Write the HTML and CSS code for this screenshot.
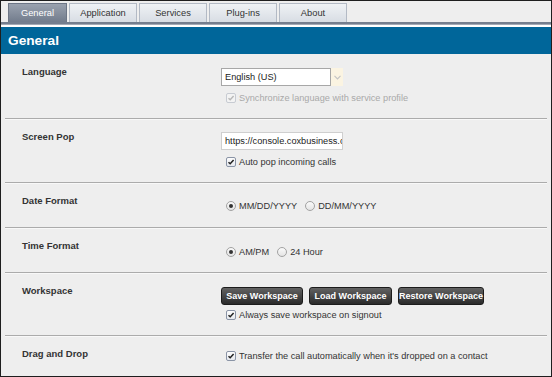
FILE: index.html
```html
<!DOCTYPE html>
<html>
<head>
<meta charset="utf-8">
<link rel="stylesheet" href="styles.css">
</head>
<body>
<div class="frame">
  <div class="tabs">
    <div class="tab tab-active tab-first">General</div>
    <div class="tab">Application</div>
    <div class="tab">Services</div>
    <div class="tab">Plug-ins</div>
    <div class="tab">About</div>
  </div>
  <div class="tabline"></div>
  <div class="header">General</div>
  <div class="rows">
    <div class="row row-h64">
      <div class="label">Language</div>
      <div class="ctrl">
        <div class="select">
          <div class="select-value">English (US)</div>
          <div class="select-arrow">
            <svg width="7" height="5" viewBox="0 0 7 5"><path d="M0.5 0.8 L3.5 3.8 L6.5 0.8" fill="none" stroke="#c4c4c4" stroke-width="1.2"/></svg>
          </div>
        </div>
        <div class="opt opt-gap6 opt-disabled">
          <span class="cb cb-disabled"><svg width="8" height="8" viewBox="0 0 8 8"><path d="M1.5 4.2 L3.2 5.8 L6.6 2" fill="none" stroke="#b8b8b8" stroke-width="1.4"/></svg></span>
          <span>Synchronize language with service profile</span>
        </div>
      </div>
    </div>
    <div class="row row-h63">
      <div class="label">Screen Pop</div>
      <div class="ctrl ctrl-pt1">
        <input class="textbox" type="text" value="https://console.coxbusiness.com/screenpop">
        <div class="opt opt-gap6">
          <span class="cb"><svg width="8" height="8" viewBox="0 0 8 8"><path d="M1.5 4.2 L3.2 5.8 L6.6 2" fill="none" stroke="#222" stroke-width="1.5"/></svg></span>
          <span>Auto pop incoming calls</span>
        </div>
      </div>
    </div>
    <div class="row row-h44">
      <div class="label">Date Format</div>
      <div class="ctrl ctrl-pt5">
        <div class="opt">
          <span class="radio radio-on"></span><span class="radio-text">MM/DD/YYYY</span>
          <span class="radio"></span><span>DD/MM/YYYY</span>
        </div>
      </div>
    </div>
    <div class="row row-h44">
      <div class="label">Time Format</div>
      <div class="ctrl ctrl-pt6">
        <div class="opt">
          <span class="radio radio-on"></span><span class="radio-text">AM/PM</span>
          <span class="radio"></span><span>24 Hour</span>
        </div>
      </div>
    </div>
    <div class="row row-h62">
      <div class="label">Workspace</div>
      <div class="ctrl">
        <div class="buttons">
          <div class="btn btn-save">Save Workspace</div>
          <div class="btn btn-load">Load Workspace</div>
          <div class="btn btn-restore">Restore Workspace</div>
        </div>
        <div class="opt opt-gap4">
          <span class="cb"><svg width="8" height="8" viewBox="0 0 8 8"><path d="M1.5 4.2 L3.2 5.8 L6.6 2" fill="none" stroke="#222" stroke-width="1.5"/></svg></span>
          <span>Always save workspace on signout</span>
        </div>
      </div>
    </div>
    <div class="row row-last">
      <div class="label">Drag and Drop</div>
      <div class="ctrl ctrl-pt2">
        <div class="opt">
          <span class="cb"><svg width="8" height="8" viewBox="0 0 8 8"><path d="M1.5 4.2 L3.2 5.8 L6.6 2" fill="none" stroke="#222" stroke-width="1.5"/></svg></span>
          <span>Transfer the call automatically when it's dropped on a contact</span>
        </div>
      </div>
    </div>
  </div>
</div>
</body>
</html>
```

FILE: styles.css
```css
* { box-sizing: border-box; }
html, body { margin: 0; padding: 0; background: #eeeeee; }
body { font-family: "Liberation Sans", Arial, sans-serif; color: #333; }

.frame {
  width: 552px;
  height: 377px;
  border: 1px solid #1e1e1e;
  background: #eeeeee;
  overflow: hidden;
  display: flex;
  flex-direction: column;
}

.tabs {
  display: flex;
  gap: 2px;
  padding: 2px 0 0 7px;
  height: 21px;
}
.tab {
  width: 68px;
  height: 19px;
  border: 1px solid #b3bac5;
  border-bottom: none;
  background: linear-gradient(#eff2f5, #d8dde4);
  font-size: 9.3px;
  color: #333;
  display: flex;
  align-items: center;
  justify-content: center;
}
.tab-first { width: 59px; }
.tab-active {
  background: linear-gradient(#9aa2af, #727c8c);
  border-color: #6d7686;
  color: #fff;
}

.tabline {
  height: 5px;
  border-top: 2px solid #757e8e;
  border-bottom: 2px solid #ffffff;
  background: #a4aab5;
}

.header {
  height: 27px;
  background: #00669a;
  color: #fff;
  font-weight: bold;
  font-size: 13.7px;
  padding-left: 7px;
  display: flex;
  align-items: center;
}

.rows {
  display: flex;
  flex-direction: column;
  padding: 0 4px;
}
.row {
  display: flex;
  padding: 12px 0 0 17px;
  border-bottom: 1px solid #ababab;
  box-shadow: 0 1px 0 #f8f8f8;
}
.row-h64 { height: 65px; }
.row-h63 { height: 64px; }
.row-h44 { height: 45px; }
.row-h62 { height: 63px; }
.row-last { border-bottom: none; box-shadow: none; flex: 1; }

.label {
  width: 199px;
  flex: none;
  font-weight: bold;
  font-size: 9.5px;
  line-height: 12px;
  color: #333;
}

.ctrl {
  display: flex;
  flex-direction: column;
  padding-top: 2px;
  font-size: 9.2px;
}
.ctrl-pt1 { padding-top: 1px; }
.ctrl-pt2 { padding-top: 2px; }
.ctrl-pt5 { padding-top: 5px; }
.ctrl-pt6 { padding-top: 6px; }

.select {
  display: flex;
  height: 18px;
  width: 122px;
}
.select-value {
  width: 110px;
  border: 1px solid #a7a7a7;
  background: #fff;
  padding-left: 3px;
  line-height: 16px;
  color: #222;
}
.select-arrow {
  width: 12px;
  background: #fbf4e2;
  display: flex;
  align-items: center;
  justify-content: center;
}

.textbox {
  width: 122px;
  height: 18px;
  margin: 0;
  border: 1px solid #cfcfcf;
  border-radius: 0;
  background: #fff;
  padding: 0 0 0 3px;
  font-family: "Liberation Sans", Arial, sans-serif;
  font-size: 9.2px;
  line-height: 16px;
  color: #222;
  outline: none;
}

.opt {
  display: flex;
  align-items: center;
  height: 12px;
  line-height: 12px;
  padding-left: 5px;
  color: #333;
  white-space: nowrap;
}
.opt-gap6 { margin-top: 6px; }
.opt-gap4 { margin-top: 4px; }
.opt-disabled { color: #a9a9a9; }

.cb {
  width: 10px;
  height: 10px;
  border: 1px solid #8a94a6;
  border-radius: 2px;
  background: linear-gradient(#fdfdfd, #e6e9ee);
  margin-right: 3px;
  display: flex;
  align-items: center;
  justify-content: center;
  flex: none;
}
.cb-disabled { border-color: #c7cbd2; background: #f3f3f3; }

.radio {
  width: 10px;
  height: 10px;
  border: 1px solid #a2a2a2;
  border-radius: 50%;
  background: linear-gradient(#fafafa, #e4e4e4);
  margin-right: 3px;
  flex: none;
  display: flex;
  align-items: center;
  justify-content: center;
}
.radio-on::after {
  content: "";
  width: 4px;
  height: 4px;
  border-radius: 50%;
  background: #333;
}
.radio-text { margin-right: 8px; }

.buttons {
  display: flex;
  gap: 6px;
  height: 18px;
}
.btn {
  height: 18px;
  border: 1px solid #1c1c1c;
  border-radius: 3px;
  background: linear-gradient(#626262, #2a2a2a);
  color: #fff;
  font-weight: bold;
  font-size: 9px;
  display: flex;
  align-items: center;
  justify-content: center;
}
.btn-save { width: 82px; }
.btn-load { width: 83px; }
.btn-restore { width: 86px; }
```
